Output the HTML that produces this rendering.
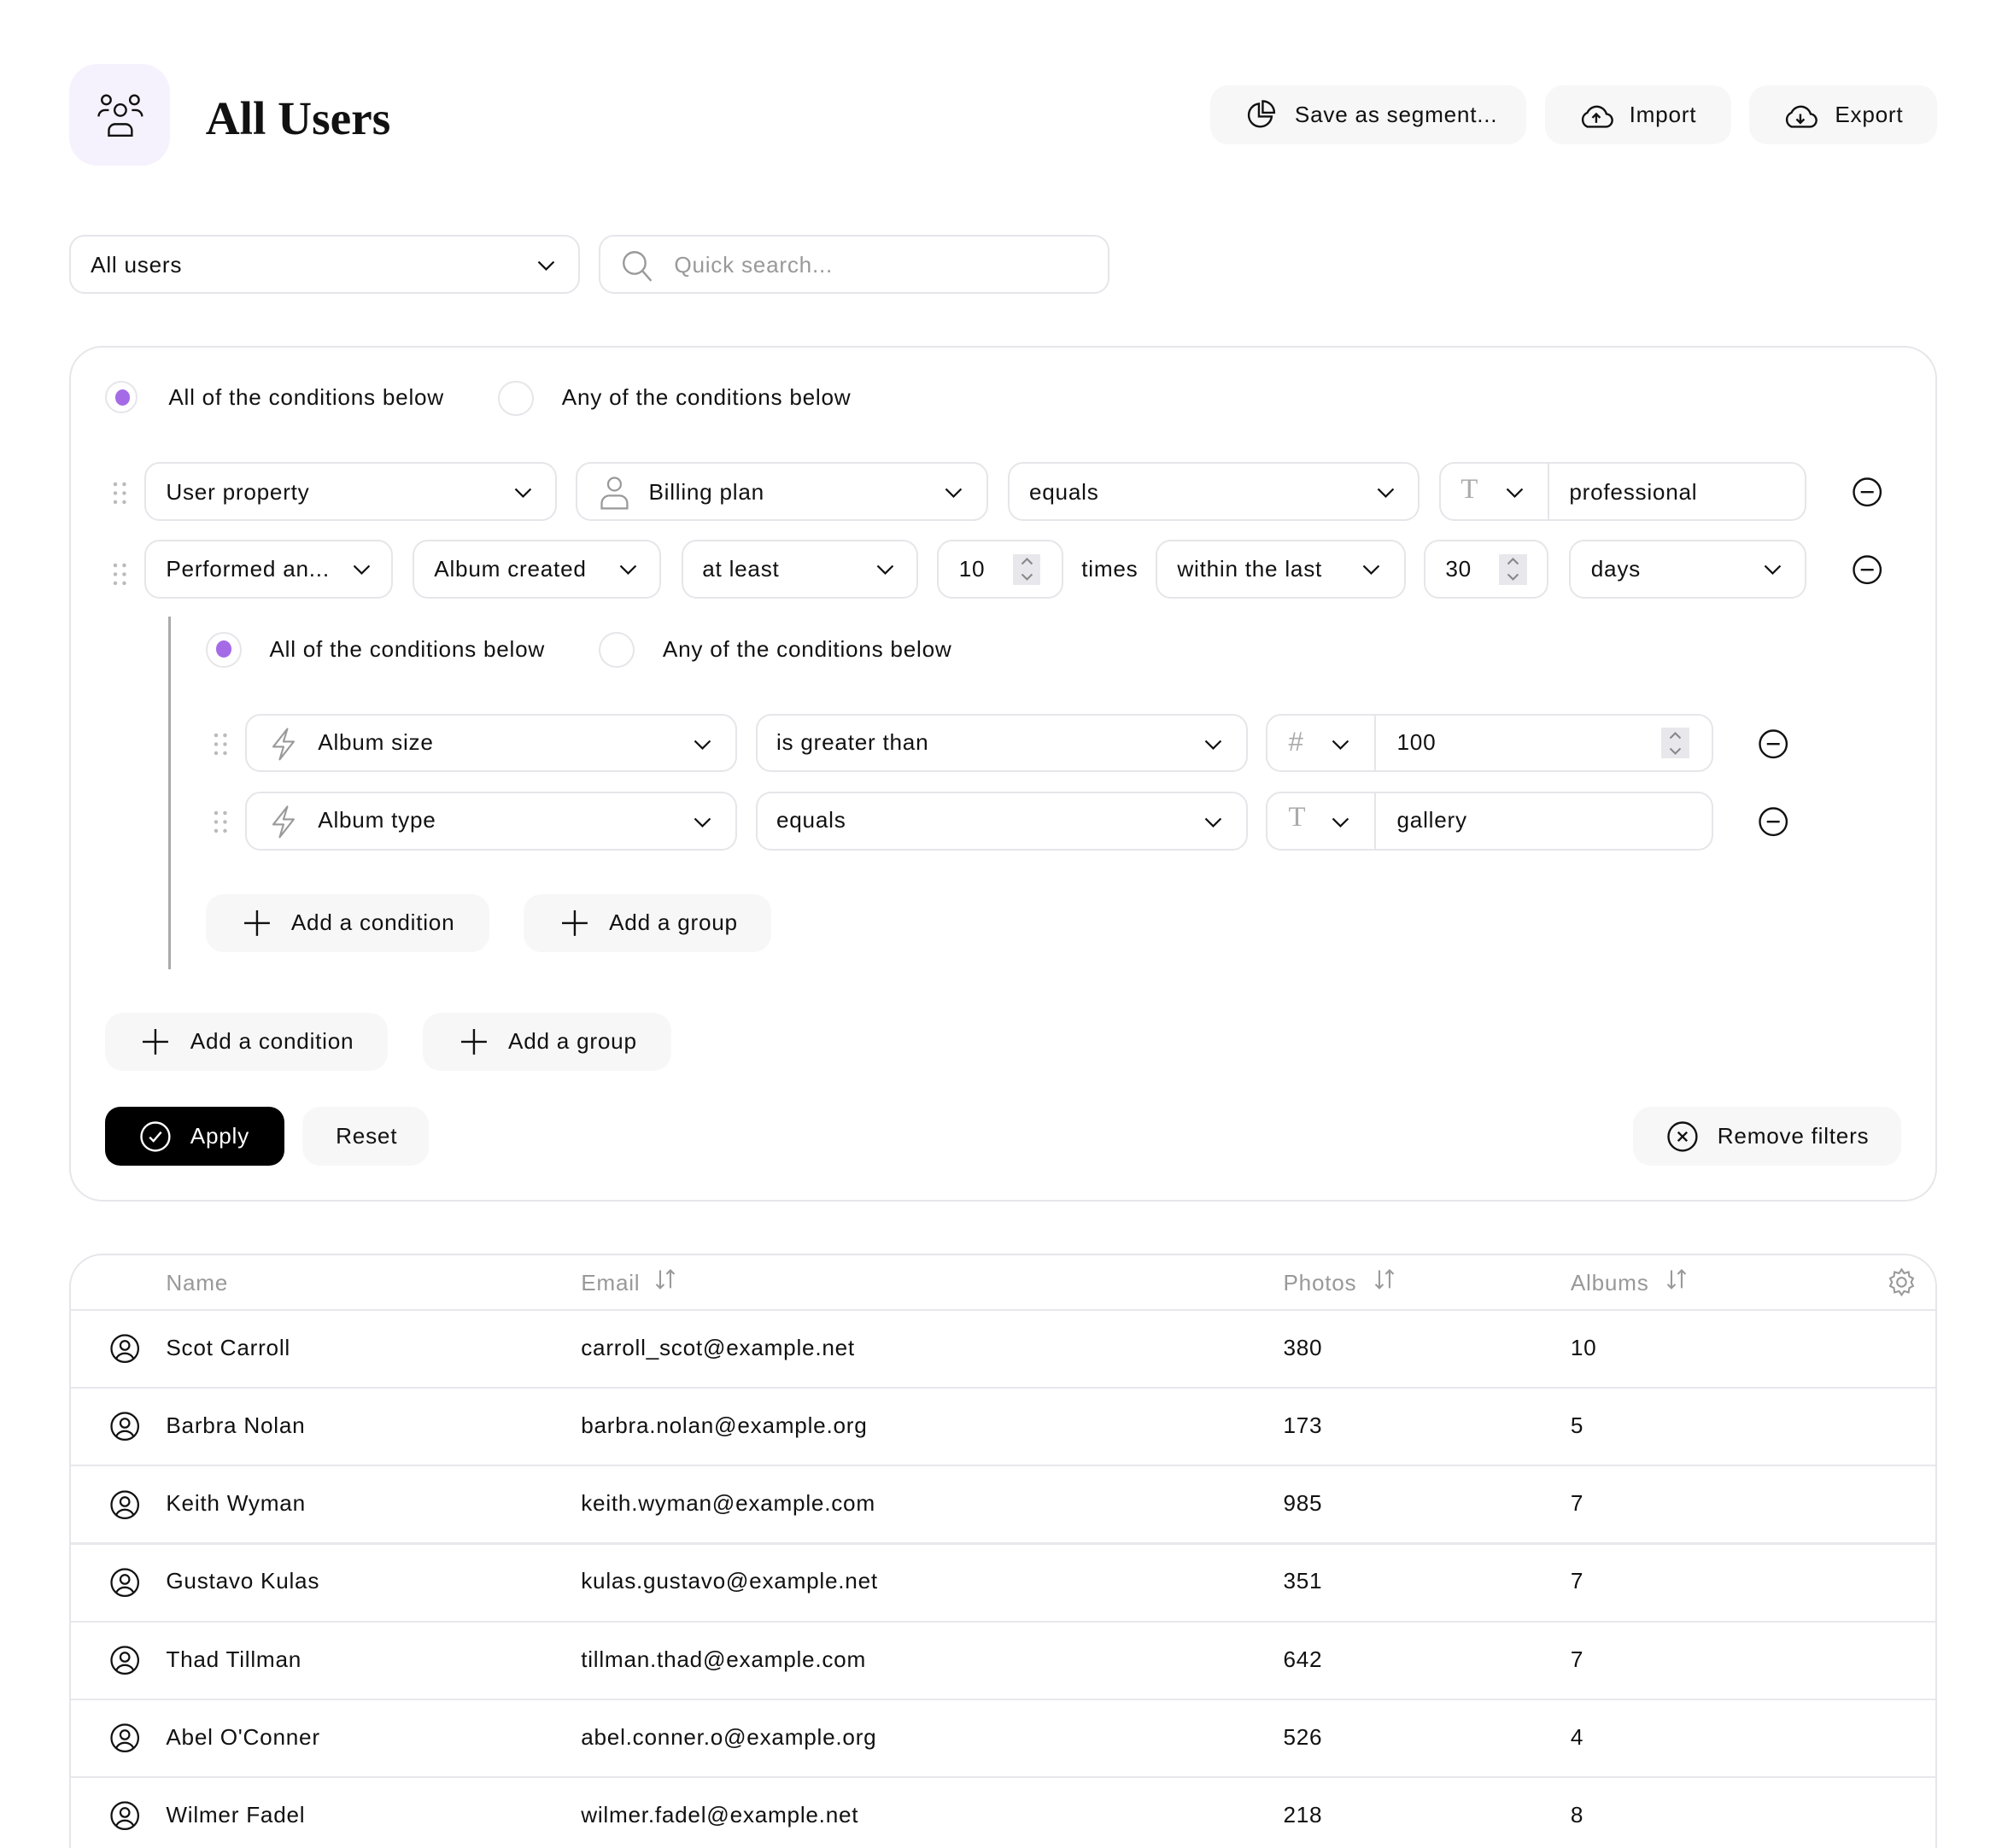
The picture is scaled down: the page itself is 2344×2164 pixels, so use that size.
<!DOCTYPE html>
<html><head><meta charset="utf-8"><style>
html,body{margin:0;padding:0;background:#fff;overflow:hidden}
body{width:2344px;height:2164px}
#w{zoom:1.495;position:relative;width:1568px;height:1448px;font-family:"Liberation Sans",sans-serif;font-size:17.5px;letter-spacing:0.5px;color:#111}
.a{position:absolute}
.box{position:absolute;border:1.5px solid #e6e6ea;border-radius:12px;box-sizing:border-box;background:#fff}
.t{position:absolute;white-space:nowrap;line-height:20px}
.btn{position:absolute;background:#f7f7f7;border-radius:14px}
.chev{position:absolute}
svg{overflow:visible}
.g{color:#999}
.hl{position:absolute;left:0;right:0;height:1.5px;background:#e8e8ec}
</style></head><body><div id="w">
<!-- header -->
<div class="a" style="left:54px;top:50px;width:79px;height:80px;border-radius:22px;background:#f6f2fd"></div>
<svg class="a" style="left:74px;top:72px" width="40" height="36" fill="none" stroke="#111" stroke-width="1.6">
<circle cx="20" cy="14" r="4.5"/><circle cx="9" cy="6" r="3.5"/><circle cx="31" cy="6" r="3.5"/>
<path d="M11 34v-4a5 5 0 0 1 5-5h8a5 5 0 0 1 5 5v4z"/><path d="M3 19a5 5 0 0 1 5-5h3"/><path d="M37 19a5 5 0 0 0-5-5h-3"/></svg>
<div class="t" style="left:161px;top:73px;font-family:'Liberation Serif',serif;font-weight:bold;font-size:37px;line-height:40px;letter-spacing:0">All Users</div>

<div class="btn" style="left:948px;top:67px;width:247px;height:46px"></div>
<svg class="a" style="left:976px;top:78px" width="24" height="24" fill="none" stroke="#111" stroke-width="1.6"><path d="M10 3a9 9 0 1 0 10 10H10z"/><path d="M13 1v9h9a9 9 0 0 0-9-9z"/></svg>
<div class="t" style="left:1014px;top:80px">Save as segment...</div>
<div class="btn" style="left:1210px;top:67px;width:146px;height:46px"></div>
<svg class="a" style="left:1236px;top:80px" width="28" height="20" fill="none" stroke="#111" stroke-width="1.6"><path d="M7 19h14a5 5 0 0 0 1-10 8 8 0 0 0-15-1 6 6 0 0 0 0 11z"/><path d="M14 16V9m-3 3l3-3 3 3"/></svg>
<div class="t" style="left:1276px;top:80px">Import</div>
<div class="btn" style="left:1370px;top:67px;width:147px;height:46px"></div>
<svg class="a" style="left:1396px;top:80px" width="28" height="20" fill="none" stroke="#111" stroke-width="1.6"><path d="M7 19h14a5 5 0 0 0 1-10 8 8 0 0 0-15-1 6 6 0 0 0 0 11z"/><path d="M14 9v7m-3-3l3 3 3-3"/></svg>
<div class="t" style="left:1437px;top:80px">Export</div>

<!-- selects -->
<div class="box" style="left:54px;top:184px;width:400px;height:46px"></div>
<div class="t" style="left:71px;top:198px">All users</div>
<svg class="chev" style="left:421px;top:204px" width="14" height="8" fill="none" stroke="#111" stroke-width="1.5"><path d="M1 1l6 6 6-6"/></svg>
<div class="box" style="left:469px;top:184px;width:400px;height:46px"></div>
<svg class="a" style="left:487px;top:196px" width="26" height="26" fill="none" stroke="#999" stroke-width="1.6"><circle cx="10" cy="10" r="8.5"/><path d="M16 16l7 8"/></svg>
<div class="t g" style="left:528px;top:198px">Quick search...</div>

<!-- filter panel -->
<div class="box" style="left:54px;top:271px;width:1463px;height:670px;border-radius:26px"></div>
<div class="a" style="left:82px;top:298px;width:26px;height:26px;border:1.5px solid #e6e6ea;border-radius:50%;box-sizing:border-box"></div>
<div class="a" style="left:90px;top:305px;width:12px;height:13px;border-radius:50%;background:#a56be6"></div>
<div class="t" style="left:132px;top:302px">All of the conditions below</div>
<div class="a" style="left:390px;top:298px;width:28px;height:28px;border:1.5px solid #e6e6ea;border-radius:50%;box-sizing:border-box"></div>
<div class="t" style="left:440px;top:302px">Any of the conditions below</div>

<!-- drag dots -->
<svg class="a" style="left:88px;top:377px" width="11" height="18" fill="#bbb"><circle cx="2" cy="2" r="1.5"/><circle cx="9" cy="2" r="1.5"/><circle cx="2" cy="9" r="1.5"/><circle cx="9" cy="9" r="1.5"/><circle cx="2" cy="16" r="1.5"/><circle cx="9" cy="16" r="1.5"/></svg>
<svg class="a" style="left:88px;top:441px" width="11" height="18" fill="#bbb"><circle cx="2" cy="2" r="1.5"/><circle cx="9" cy="2" r="1.5"/><circle cx="2" cy="9" r="1.5"/><circle cx="9" cy="9" r="1.5"/><circle cx="2" cy="16" r="1.5"/><circle cx="9" cy="16" r="1.5"/></svg>

<!-- row 1 -->
<div class="box" style="left:113px;top:362px;width:323px;height:46px"></div>
<div class="t" style="left:130px;top:376px">User property</div>
<svg class="chev" style="left:403px;top:382px" width="14" height="8" fill="none" stroke="#111" stroke-width="1.5"><path d="M1 1l6 6 6-6"/></svg>
<div class="box" style="left:451px;top:362px;width:323px;height:46px"></div>
<svg class="a" style="left:470px;top:373px" width="22" height="26" fill="none" stroke="#999" stroke-width="1.5"><circle cx="11" cy="6" r="5"/><path d="M1 25v-4a6 6 0 0 1 6-6h8a6 6 0 0 1 6 6v4z"/></svg>
<div class="t" style="left:508px;top:376px">Billing plan</div>
<svg class="chev" style="left:740px;top:382px" width="14" height="8" fill="none" stroke="#111" stroke-width="1.5"><path d="M1 1l6 6 6-6"/></svg>
<div class="box" style="left:789px;top:362px;width:323px;height:46px"></div>
<div class="t" style="left:806px;top:376px">equals</div>
<svg class="chev" style="left:1078px;top:382px" width="14" height="8" fill="none" stroke="#111" stroke-width="1.5"><path d="M1 1l6 6 6-6"/></svg>
<div class="box" style="left:1127px;top:362px;width:288px;height:46px"></div>
<div class="a" style="left:1212px;top:363px;width:1.5px;height:44px;background:#e6e6ea"></div>
<div class="t g" style="left:1144px;top:374px;font-family:'Liberation Serif',serif;font-size:22px;color:#aaa">T</div>
<svg class="chev" style="left:1179px;top:382px" width="14" height="8" fill="none" stroke="#111" stroke-width="1.5"><path d="M1 1l6 6 6-6"/></svg>
<div class="t" style="left:1229px;top:376px">professional</div>
<svg class="a" style="left:1451px;top:374px" width="23" height="23" fill="none" stroke="#111" stroke-width="1.6"><circle cx="11.5" cy="11.5" r="10.5"/><path d="M6.5 11.5h10"/></svg>

<!-- row 2 -->
<div class="box" style="left:113px;top:423px;width:195px;height:46px"></div>
<div class="t" style="left:130px;top:436px">Performed an...</div>
<svg class="chev" style="left:276px;top:442px" width="14" height="8" fill="none" stroke="#111" stroke-width="1.5"><path d="M1 1l6 6 6-6"/></svg>
<div class="box" style="left:323px;top:423px;width:195px;height:46px"></div>
<div class="t" style="left:340px;top:436px">Album created</div>
<svg class="chev" style="left:485px;top:442px" width="14" height="8" fill="none" stroke="#111" stroke-width="1.5"><path d="M1 1l6 6 6-6"/></svg>
<div class="box" style="left:534px;top:423px;width:185px;height:46px"></div>
<div class="t" style="left:550px;top:436px">at least</div>
<svg class="chev" style="left:686px;top:442px" width="14" height="8" fill="none" stroke="#111" stroke-width="1.5"><path d="M1 1l6 6 6-6"/></svg>
<div class="box" style="left:734px;top:423px;width:99px;height:46px"></div>
<div class="t" style="left:751px;top:436px">10</div>
<div class="a" style="left:793px;top:434px;width:22px;height:24px;background:#e8e8ec"></div>
<svg class="a" style="left:799px;top:437px" width="10" height="18" fill="none" stroke="#888" stroke-width="1.4"><path d="M1 5l4-4 4 4M1 13l4 4 4-4"/></svg>
<div class="t" style="left:847px;top:436px">times</div>
<div class="box" style="left:905px;top:423px;width:196px;height:46px"></div>
<div class="t" style="left:922px;top:436px">within the last</div>
<svg class="chev" style="left:1067px;top:442px" width="14" height="8" fill="none" stroke="#111" stroke-width="1.5"><path d="M1 1l6 6 6-6"/></svg>
<div class="box" style="left:1115px;top:423px;width:98px;height:46px"></div>
<div class="t" style="left:1132px;top:436px">30</div>
<div class="a" style="left:1174px;top:434px;width:22px;height:24px;background:#e8e8ec"></div>
<svg class="a" style="left:1180px;top:437px" width="10" height="18" fill="none" stroke="#888" stroke-width="1.4"><path d="M1 5l4-4 4 4M1 13l4 4 4-4"/></svg>
<div class="box" style="left:1229px;top:423px;width:186px;height:46px"></div>
<div class="t" style="left:1246px;top:436px">days</div>
<svg class="chev" style="left:1381px;top:442px" width="14" height="8" fill="none" stroke="#111" stroke-width="1.5"><path d="M1 1l6 6 6-6"/></svg>
<svg class="a" style="left:1451px;top:435px" width="23" height="23" fill="none" stroke="#111" stroke-width="1.6"><circle cx="11.5" cy="11.5" r="10.5"/><path d="M6.5 11.5h10"/></svg>

<!-- nested group -->
<div class="a" style="left:132px;top:483px;width:2px;height:276px;background:#aaa"></div>
<div class="a" style="left:161px;top:495px;width:28px;height:28px;border:1.5px solid #e6e6ea;border-radius:50%;box-sizing:border-box"></div>
<div class="a" style="left:169px;top:502px;width:12px;height:13px;border-radius:50%;background:#a56be6"></div>
<div class="t" style="left:211px;top:499px">All of the conditions below</div>
<div class="a" style="left:469px;top:495px;width:28px;height:28px;border:1.5px solid #e6e6ea;border-radius:50%;box-sizing:border-box"></div>
<div class="t" style="left:519px;top:499px">Any of the conditions below</div>

<svg class="a" style="left:167px;top:574px" width="11" height="18" fill="#bbb"><circle cx="2" cy="2" r="1.5"/><circle cx="9" cy="2" r="1.5"/><circle cx="2" cy="9" r="1.5"/><circle cx="9" cy="9" r="1.5"/><circle cx="2" cy="16" r="1.5"/><circle cx="9" cy="16" r="1.5"/></svg>
<svg class="a" style="left:167px;top:635px" width="11" height="18" fill="#bbb"><circle cx="2" cy="2" r="1.5"/><circle cx="9" cy="2" r="1.5"/><circle cx="2" cy="9" r="1.5"/><circle cx="9" cy="9" r="1.5"/><circle cx="2" cy="16" r="1.5"/><circle cx="9" cy="16" r="1.5"/></svg>

<div class="box" style="left:192px;top:559px;width:385px;height:46px"></div>
<svg class="a" style="left:212px;top:570px" width="20" height="26" fill="none" stroke="#999" stroke-width="1.4" stroke-linejoin="round"><path d="M13 1L2 15h8l-3 10 11-14h-8z"/></svg>
<div class="t" style="left:249px;top:572px">Album size</div>
<svg class="chev" style="left:543px;top:579px" width="14" height="8" fill="none" stroke="#111" stroke-width="1.5"><path d="M1 1l6 6 6-6"/></svg>
<div class="box" style="left:592px;top:559px;width:385px;height:46px"></div>
<div class="t" style="left:608px;top:572px">is greater than</div>
<svg class="chev" style="left:943px;top:579px" width="14" height="8" fill="none" stroke="#111" stroke-width="1.5"><path d="M1 1l6 6 6-6"/></svg>
<div class="box" style="left:991px;top:559px;width:351px;height:46px"></div>
<div class="a" style="left:1076px;top:560px;width:1.5px;height:44px;background:#e6e6ea"></div>
<div class="t" style="left:1009px;top:571px;font-size:21px;color:#aaa">#</div>
<svg class="chev" style="left:1043px;top:579px" width="14" height="8" fill="none" stroke="#111" stroke-width="1.5"><path d="M1 1l6 6 6-6"/></svg>
<div class="t" style="left:1094px;top:572px">100</div>
<div class="a" style="left:1301px;top:570px;width:22px;height:24px;background:#e8e8ec"></div>
<svg class="a" style="left:1307px;top:573px" width="10" height="18" fill="none" stroke="#888" stroke-width="1.4"><path d="M1 5l4-4 4 4M1 13l4 4 4-4"/></svg>
<svg class="a" style="left:1377px;top:571px" width="23" height="23" fill="none" stroke="#111" stroke-width="1.6"><circle cx="11.5" cy="11.5" r="10.5"/><path d="M6.5 11.5h10"/></svg>

<div class="box" style="left:192px;top:620px;width:385px;height:46px"></div>
<svg class="a" style="left:212px;top:631px" width="20" height="26" fill="none" stroke="#999" stroke-width="1.4" stroke-linejoin="round"><path d="M13 1L2 15h8l-3 10 11-14h-8z"/></svg>
<div class="t" style="left:249px;top:633px">Album type</div>
<svg class="chev" style="left:543px;top:640px" width="14" height="8" fill="none" stroke="#111" stroke-width="1.5"><path d="M1 1l6 6 6-6"/></svg>
<div class="box" style="left:592px;top:620px;width:385px;height:46px"></div>
<div class="t" style="left:608px;top:633px">equals</div>
<svg class="chev" style="left:943px;top:640px" width="14" height="8" fill="none" stroke="#111" stroke-width="1.5"><path d="M1 1l6 6 6-6"/></svg>
<div class="box" style="left:991px;top:620px;width:351px;height:46px"></div>
<div class="a" style="left:1076px;top:621px;width:1.5px;height:44px;background:#e6e6ea"></div>
<div class="t" style="left:1009px;top:631px;font-family:'Liberation Serif',serif;font-size:22px;color:#aaa">T</div>
<svg class="chev" style="left:1043px;top:640px" width="14" height="8" fill="none" stroke="#111" stroke-width="1.5"><path d="M1 1l6 6 6-6"/></svg>
<div class="t" style="left:1094px;top:633px">gallery</div>
<svg class="a" style="left:1377px;top:632px" width="23" height="23" fill="none" stroke="#111" stroke-width="1.6"><circle cx="11.5" cy="11.5" r="10.5"/><path d="M6.5 11.5h10"/></svg>

<div class="btn" style="left:161px;top:700px;width:222px;height:46px"></div>
<svg class="a" style="left:191px;top:713px" width="20" height="20" stroke="#111" stroke-width="1.6"><path d="M10 0v20M0 10h20"/></svg>
<div class="t" style="left:228px;top:713px">Add a condition</div>
<div class="btn" style="left:410px;top:700px;width:194px;height:46px"></div>
<svg class="a" style="left:440px;top:713px" width="20" height="20" stroke="#111" stroke-width="1.6"><path d="M10 0v20M0 10h20"/></svg>
<div class="t" style="left:477px;top:713px">Add a group</div>

<div class="btn" style="left:82px;top:793px;width:222px;height:46px"></div>
<svg class="a" style="left:112px;top:806px" width="20" height="20" stroke="#111" stroke-width="1.6"><path d="M10 0v20M0 10h20"/></svg>
<div class="t" style="left:149px;top:806px">Add a condition</div>
<div class="btn" style="left:331px;top:793px;width:195px;height:46px"></div>
<svg class="a" style="left:361px;top:806px" width="20" height="20" stroke="#111" stroke-width="1.6"><path d="M10 0v20M0 10h20"/></svg>
<div class="t" style="left:398px;top:806px">Add a group</div>

<div class="a" style="left:82px;top:867px;width:141px;height:46px;background:#000;border-radius:12px"></div>
<svg class="a" style="left:110px;top:878px" width="24" height="24" fill="none" stroke="#fff" stroke-width="1.6"><circle cx="12" cy="12" r="11"/><path d="M7.5 12.5l3 3 6-7"/></svg>
<div class="t" style="left:149px;top:880px;color:#fff">Apply</div>
<div class="btn" style="left:237px;top:867px;width:99px;height:46px"></div>
<div class="t" style="left:263px;top:880px">Reset</div>
<div class="btn" style="left:1279px;top:867px;width:210px;height:46px"></div>
<svg class="a" style="left:1306px;top:878px" width="24" height="24" fill="none" stroke="#111" stroke-width="1.6"><circle cx="12" cy="12" r="11"/><path d="M8.5 8.5l7 7M15.5 8.5l-7 7"/></svg>
<div class="t" style="left:1345px;top:880px">Remove filters</div>

<!-- table -->
<div class="box" style="left:54px;top:982px;width:1463px;height:520px;border-radius:26px;overflow:hidden">
<div class="hl" style="top:42px"></div>
<div class="hl" style="top:103px"></div>
<div class="hl" style="top:164px"></div>
<div class="hl" style="top:225px"></div>
<div class="hl" style="top:286px"></div>
<div class="hl" style="top:347px"></div>
<div class="hl" style="top:408px"></div>
</div>
<div class="t g" style="left:130px;top:995px">Name</div>
<div class="t g" style="left:455px;top:995px">Email</div>
<div class="t g" style="left:1005px;top:995px">Photos</div>
<div class="t g" style="left:1230px;top:995px">Albums</div>
<svg class="a" style="left:513px;top:994px" width="16" height="16" fill="none" stroke="#999" stroke-width="1.4"><path d="M4 1v14m-3-3l3 3 3-3M12 15V1M9 4l3-3 3 3"/></svg>
<svg class="a" style="left:1076px;top:994px" width="16" height="16" fill="none" stroke="#999" stroke-width="1.4"><path d="M4 1v14m-3-3l3 3 3-3M12 15V1M9 4l3-3 3 3"/></svg>
<svg class="a" style="left:1305px;top:994px" width="16" height="16" fill="none" stroke="#999" stroke-width="1.4"><path d="M4 1v14m-3-3l3 3 3-3M12 15V1M9 4l3-3 3 3"/></svg>
<svg class="a" style="left:1478px;top:993px" width="22" height="22" fill="none" stroke="#999" stroke-width="1.4"><circle cx="11" cy="11" r="3.5"/><path d="M11 1l2 3 3.5-1 .5 3.5 3 1.5-1.5 3 1.5 3-3 1.5-.5 3.5-3.5-1-2 3-2-3-3.5 1-.5-3.5-3-1.5 1.5-3-1.5-3 3-1.5.5-3.5 3.5 1z"/></svg>

<div class="a" style="left:0;top:0">
<svg class="a" style="left:86px;top:1045px" width="23" height="23" fill="none" stroke="#111" stroke-width="1.5"><circle cx="11.5" cy="11.5" r="10.5"/><circle cx="11.5" cy="9" r="3.5"/><path d="M5 19a7 6 0 0 1 13 0"/></svg>
<div class="t" style="left:130px;top:1046px">Scot Carroll</div><div class="t" style="left:455px;top:1046px">carroll_scot@example.net</div><div class="t" style="left:1005px;top:1046px">380</div><div class="t" style="left:1230px;top:1046px">10</div>
<svg class="a" style="left:86px;top:1106px" width="23" height="23" fill="none" stroke="#111" stroke-width="1.5"><circle cx="11.5" cy="11.5" r="10.5"/><circle cx="11.5" cy="9" r="3.5"/><path d="M5 19a7 6 0 0 1 13 0"/></svg>
<div class="t" style="left:130px;top:1107px">Barbra Nolan</div><div class="t" style="left:455px;top:1107px">barbra.nolan@example.org</div><div class="t" style="left:1005px;top:1107px">173</div><div class="t" style="left:1230px;top:1107px">5</div>
<svg class="a" style="left:86px;top:1167px" width="23" height="23" fill="none" stroke="#111" stroke-width="1.5"><circle cx="11.5" cy="11.5" r="10.5"/><circle cx="11.5" cy="9" r="3.5"/><path d="M5 19a7 6 0 0 1 13 0"/></svg>
<div class="t" style="left:130px;top:1168px">Keith Wyman</div><div class="t" style="left:455px;top:1168px">keith.wyman@example.com</div><div class="t" style="left:1005px;top:1168px">985</div><div class="t" style="left:1230px;top:1168px">7</div>
<svg class="a" style="left:86px;top:1228px" width="23" height="23" fill="none" stroke="#111" stroke-width="1.5"><circle cx="11.5" cy="11.5" r="10.5"/><circle cx="11.5" cy="9" r="3.5"/><path d="M5 19a7 6 0 0 1 13 0"/></svg>
<div class="t" style="left:130px;top:1229px">Gustavo Kulas</div><div class="t" style="left:455px;top:1229px">kulas.gustavo@example.net</div><div class="t" style="left:1005px;top:1229px">351</div><div class="t" style="left:1230px;top:1229px">7</div>
<svg class="a" style="left:86px;top:1289px" width="23" height="23" fill="none" stroke="#111" stroke-width="1.5"><circle cx="11.5" cy="11.5" r="10.5"/><circle cx="11.5" cy="9" r="3.5"/><path d="M5 19a7 6 0 0 1 13 0"/></svg>
<div class="t" style="left:130px;top:1290px">Thad Tillman</div><div class="t" style="left:455px;top:1290px">tillman.thad@example.com</div><div class="t" style="left:1005px;top:1290px">642</div><div class="t" style="left:1230px;top:1290px">7</div>
<svg class="a" style="left:86px;top:1350px" width="23" height="23" fill="none" stroke="#111" stroke-width="1.5"><circle cx="11.5" cy="11.5" r="10.5"/><circle cx="11.5" cy="9" r="3.5"/><path d="M5 19a7 6 0 0 1 13 0"/></svg>
<div class="t" style="left:130px;top:1351px">Abel O'Conner</div><div class="t" style="left:455px;top:1351px">abel.conner.o@example.org</div><div class="t" style="left:1005px;top:1351px">526</div><div class="t" style="left:1230px;top:1351px">4</div>
<svg class="a" style="left:86px;top:1411px" width="23" height="23" fill="none" stroke="#111" stroke-width="1.5"><circle cx="11.5" cy="11.5" r="10.5"/><circle cx="11.5" cy="9" r="3.5"/><path d="M5 19a7 6 0 0 1 13 0"/></svg>
<div class="t" style="left:130px;top:1412px">Wilmer Fadel</div><div class="t" style="left:455px;top:1412px">wilmer.fadel@example.net</div><div class="t" style="left:1005px;top:1412px">218</div><div class="t" style="left:1230px;top:1412px">8</div>
</div>
</div></body></html>
